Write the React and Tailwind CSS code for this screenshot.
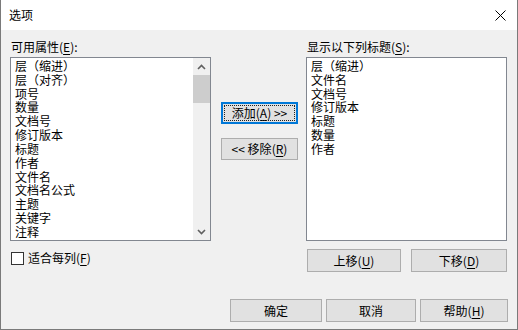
import React from "react";

const FONT = { fontFamily: '"Noto Sans CJK SC", "Noto Sans", sans-serif' };

function Acc({ k }) {
  return (
    <>
      (<u className="underline underline-offset-[2px] decoration-[1px]">{k}</u>)
    </>
  );
}

function Btn({ children, className = "" }) {
  return (
    <div
      className={
        "flex items-center justify-center bg-[#e1e1e1] border border-[#adadad] text-[12px] leading-[14px] text-black " +
        className
      }
    >
      {children}
    </div>
  );
}

const leftItems = [
  "层（缩进）",
  "层（对齐）",
  "项号",
  "数量",
  "文档号",
  "修订版本",
  "标题",
  "作者",
  "文件名",
  "文档名公式",
  "主题",
  "关键字",
  "注释",
];

const rightItems = ["层（缩进）", "文件名", "文档号", "修订版本", "标题", "数量", "作者"];

function Chevron({ up }) {
  return (
    <svg width="9" height="6" viewBox="0 0 9 6">
      <path
        d={up ? "M1 5 L4.5 1.5 L8 5" : "M1 1 L4.5 4.5 L8 1"}
        fill="none"
        stroke="#606060"
        strokeWidth="1.6"
      />
    </svg>
  );
}

export default function App() {
  return (
    <div
      style={FONT}
      className="w-[518px] h-[330px] bg-[#f0f0f0] border-x border-b border-[#7a7a7a] flex flex-col text-black overflow-hidden"
    >
      {/* title bar */}
      <div className="h-[30px] bg-white flex items-center justify-between pl-[8px] pr-[11px] shrink-0">
        <span className="text-[12px] leading-[14px]">选项</span>
        <svg width="11" height="11" viewBox="0 0 11 11">
          <path d="M0.5 0.5 L10.5 10.5 M10.5 0.5 L0.5 10.5" stroke="#000" strokeWidth="1" />
        </svg>
      </div>

      <div className="flex-1 flex flex-col pl-[9px] pr-[9px] pt-[9px]">
        <div className="flex">
          {/* left column */}
          <div className="w-[201px] flex flex-col">
            <div className="h-[16px] pl-[1px] text-[12px] leading-[16px] mb-[2px]">
              可用属性<Acc k="E" />:
            </div>
            <div className="h-[184px] bg-white border border-[#828790] flex">
              <div className="flex-1 pl-[4px] pt-[1px] text-[12px] leading-[13.83px] overflow-hidden">
                {leftItems.map((t) => (
                  <div key={t} className="whitespace-nowrap">{t}</div>
                ))}
              </div>
              <div className="w-[17px] bg-[#f0f0f0] flex flex-col">
                <div className="h-[17px] flex items-center justify-center">
                  <Chevron up />
                </div>
                <div className="h-[28px] bg-[#cdcdcd]" />
                <div className="flex-1" />
                <div className="h-[17px] flex items-center justify-center">
                  <Chevron />
                </div>
              </div>
            </div>
            <div className="flex items-center mt-[10px] pl-[1px]">
              <div className="w-[13px] h-[13px] border border-[#333] bg-white" />
              <span className="ml-[4px] text-[12px] leading-[14px]">
                适合每列<Acc k="F" />
              </span>
            </div>
          </div>

          {/* middle column */}
          <div className="ml-[10px] w-[77px] flex flex-col pt-[63px]">
            <div className="relative h-[22px] flex items-center justify-center bg-[#e1e1e1] border-2 border-[#0078d7] text-[12px] leading-[14px]">
              <span>
                添加<Acc k="A" /> &gt;&gt;
              </span>
              <span className="absolute inset-[1px] border border-dotted border-[#222]" />
            </div>
            <Btn className="h-[22px] mt-[14px]">
              &lt;&lt; 移除<Acc k="R" />
            </Btn>
          </div>

          {/* right column */}
          <div className="ml-[8px] w-[201px] flex flex-col">
            <div className="h-[16px] pl-[1px] text-[12px] leading-[16px] mb-[2px]">
              显示以下列标题<Acc k="S" />:
            </div>
            <div className="h-[184px] bg-white border border-[#828790] pl-[4px] pt-[1px] text-[12px] leading-[13.83px]">
              {rightItems.map((t) => (
                <div key={t} className="whitespace-nowrap">{t}</div>
              ))}
            </div>
            <div className="flex justify-between mt-[8px]">
              <Btn className="w-[94px] h-[23px] ml-[1px]">
                上移<Acc k="U" />
              </Btn>
              <Btn className="w-[96px] h-[23px]">
                下移<Acc k="D" />
              </Btn>
            </div>
          </div>
        </div>

        {/* bottom buttons */}
        <div className="flex justify-end gap-[4px] mt-[27px]">
          <Btn className="w-[92px] h-[23px]">确定</Btn>
          <Btn className="w-[90px] h-[23px]">取消</Btn>
          <Btn className="w-[88px] h-[23px]">
            帮助<Acc k="H" />
          </Btn>
        </div>
      </div>
    </div>
  );
}
